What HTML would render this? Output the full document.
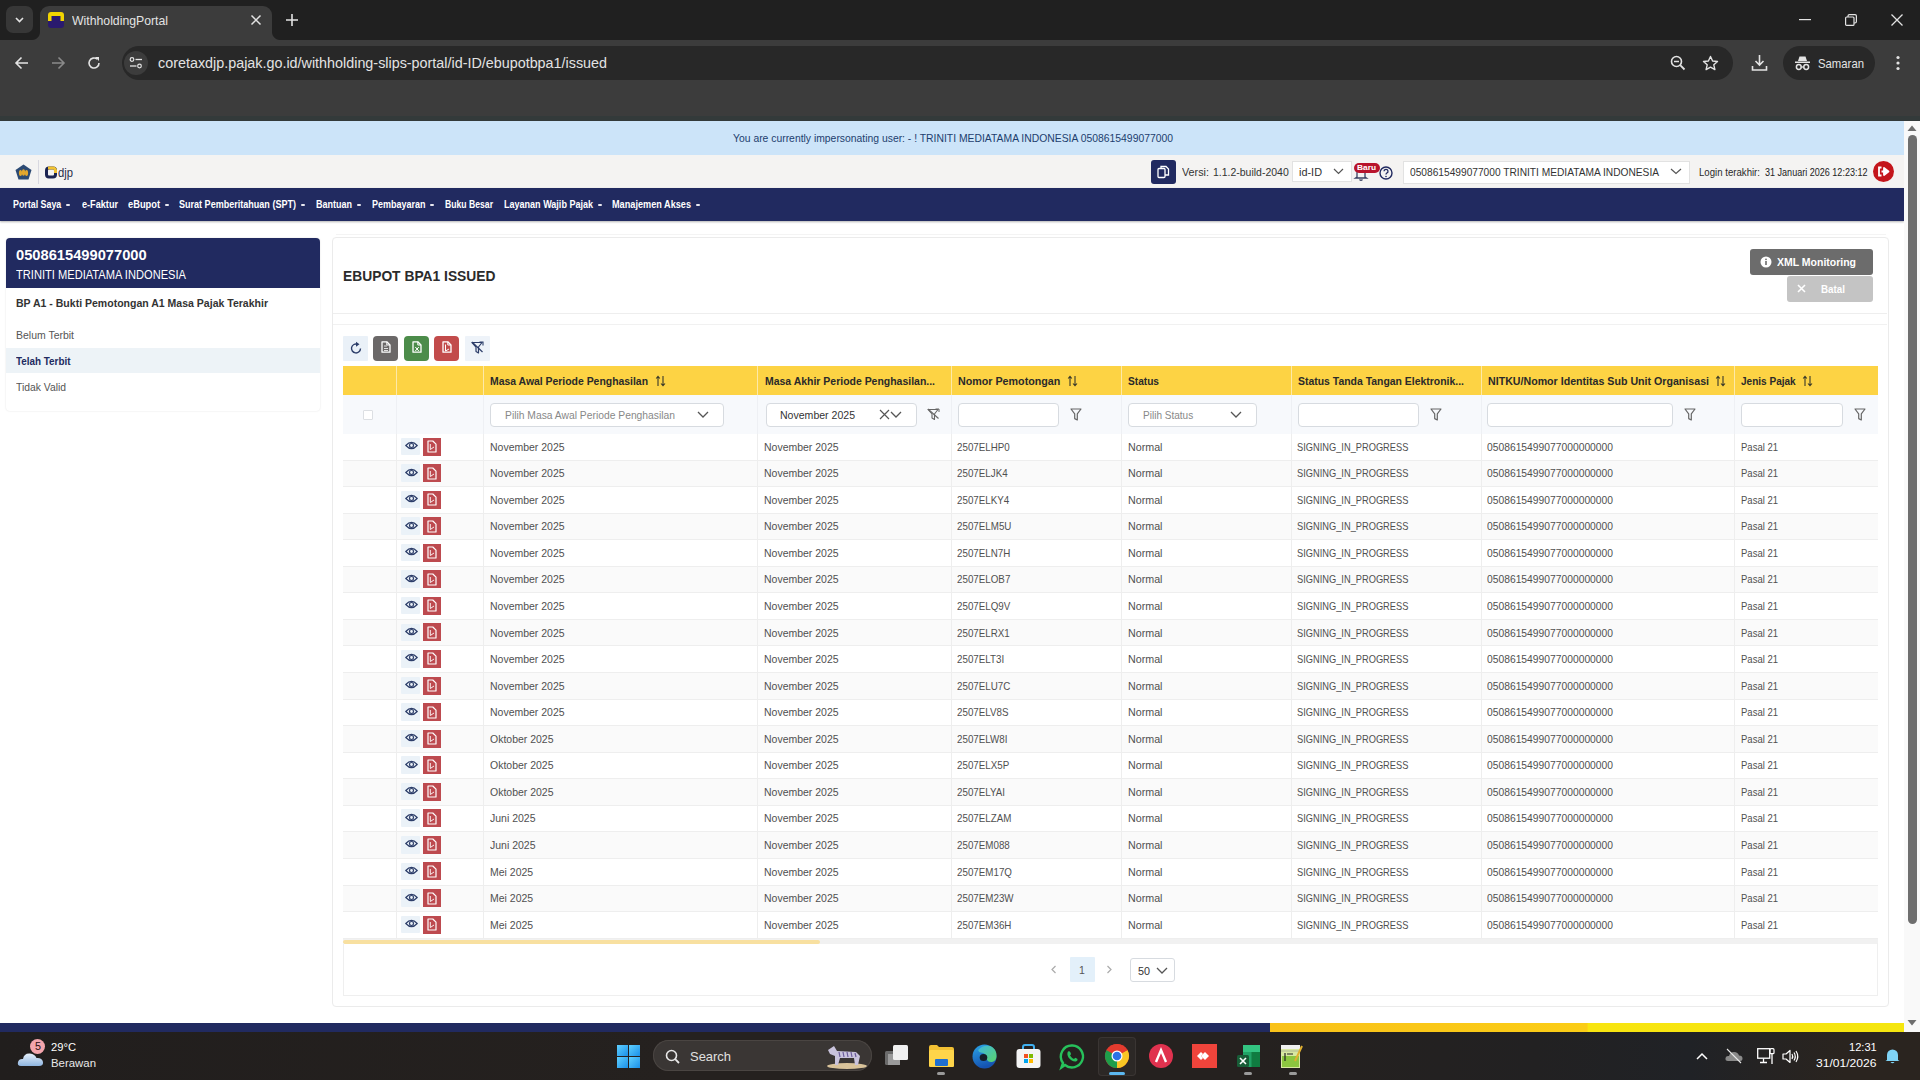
<!DOCTYPE html>
<html><head><meta charset="utf-8"><style>
html,body{margin:0;padding:0;width:1920px;height:1080px;overflow:hidden;position:relative;font-family:"Liberation Sans",sans-serif;}
.t{position:absolute;white-space:nowrap;line-height:1;transform-origin:0 0;}
svg{overflow:visible}
</style></head><body>
<div style="position:absolute;left:0px;top:0px;width:1920px;height:40px;background:#202020"></div>
<div style="position:absolute;left:0px;top:40px;width:1920px;height:81px;background:#3c3c3c"></div>
<div style="position:absolute;left:40px;top:6px;width:232px;height:40px;background:#3c3c3c;border-radius:9px 9px 0 0"></div>
<div style="position:absolute;left:32px;top:32px;width:8px;height:8px;background:radial-gradient(circle at 0 0,#202020 7.5px,#3c3c3c 8.5px)"></div>
<div style="position:absolute;left:272px;top:32px;width:8px;height:8px;background:radial-gradient(circle at 100% 0,#202020 7.5px,#3c3c3c 8.5px)"></div>
<div style="position:absolute;left:6px;top:6px;width:27px;height:27px;background:#373737;border-radius:7px"></div>
<svg style="position:absolute;left:14px;top:14px" width="11" height="11" viewBox="0 0 11 11"><path d="M2 4 L5.5 7.5 L9 4" stroke="#e3e3e3" stroke-width="1.6" fill="none"/></svg>
<svg style="position:absolute;left:48px;top:12px" width="16" height="16" viewBox="0 0 16 16"><rect x="0" y="0" width="16" height="16" rx="3" fill="#2a1a6e"/><path d="M0 9 V3 Q0 0 3 0 H13 Q16 0 16 3 V9 H12.5 V4 H3.5 V9 Z" fill="#f2d500"/></svg>
<div class="t" style="left:72.00px;top:14.13px;font-size:13px;color:#e3e3e3;transform:scaleX(0.9423);">WithholdingPortal</div>
<svg style="position:absolute;left:250px;top:14px" width="12" height="12" viewBox="0 0 12 12"><path d="M1.5 1.5 L10.5 10.5 M10.5 1.5 L1.5 10.5" stroke="#e3e3e3" stroke-width="1.5"/></svg>
<svg style="position:absolute;left:285px;top:13px" width="14" height="14" viewBox="0 0 14 14"><path d="M7 1 V13 M1 7 H13" stroke="#e3e3e3" stroke-width="1.6"/></svg>
<svg style="position:absolute;left:1799px;top:19px" width="12" height="2" viewBox="0 0 12 2"><rect width="12" height="1.2" fill="#e3e3e3"/></svg>
<svg style="position:absolute;left:1845px;top:14px" width="12" height="12" viewBox="0 0 12 12"><rect x="0.6" y="3" width="8.4" height="8.4" rx="1" stroke="#e3e3e3" stroke-width="1.2" fill="none"/><path d="M3 3 V2 Q3 0.6 4.4 0.6 H10 Q11.4 0.6 11.4 2 V7.6 Q11.4 9 10 9 H9" stroke="#e3e3e3" stroke-width="1.2" fill="none"/></svg>
<svg style="position:absolute;left:1891px;top:14px" width="12" height="12" viewBox="0 0 12 12"><path d="M0.5 0.5 L11.5 11.5 M11.5 0.5 L0.5 11.5" stroke="#e3e3e3" stroke-width="1.3"/></svg>
<svg style="position:absolute;left:14px;top:56px" width="16" height="14" viewBox="0 0 16 14"><path d="M14 7 H2 M7.5 1.5 L2 7 L7.5 12.5" stroke="#e3e3e3" stroke-width="1.6" fill="none"/></svg>
<svg style="position:absolute;left:50px;top:56px" width="16" height="14" viewBox="0 0 16 14"><path d="M2 7 H14 M8.5 1.5 L14 7 L8.5 12.5" stroke="#8a8a8a" stroke-width="1.6" fill="none"/></svg>
<svg style="position:absolute;left:87px;top:56px" width="14" height="14" viewBox="0 0 14 14"><path d="M12 7 A5 5 0 1 1 10.2 3.2" stroke="#e3e3e3" stroke-width="1.6" fill="none"/><path d="M8 1 L12 1 L12 5 Z" fill="#e3e3e3"/></svg>
<div style="position:absolute;left:122px;top:46px;width:1611px;height:34px;background:#282828;border-radius:17px"></div>
<div style="position:absolute;left:124px;top:51px;width:24px;height:24px;background:#3c3c3c;border-radius:12px"></div>
<svg style="position:absolute;left:129px;top:56px" width="14" height="14" viewBox="0 0 14 14"><circle cx="3" cy="3.5" r="1.8" stroke="#e3e3e3" stroke-width="1.2" fill="none"/><path d="M6.5 3.5 H13" stroke="#e3e3e3" stroke-width="1.3"/><circle cx="10.5" cy="10" r="1.8" stroke="#e3e3e3" stroke-width="1.2" fill="none"/><path d="M1 10 H7.5" stroke="#e3e3e3" stroke-width="1.3"/></svg>
<div class="t" style="left:157.50px;top:56.14px;font-size:14px;color:#e3e3e3;transform:scaleX(1.0248);">coretaxdjp.pajak.go.id/withholding-slips-portal/id-ID/ebupotbpa1/issued</div>
<svg style="position:absolute;left:1670px;top:55px" width="16" height="16" viewBox="0 0 16 16"><circle cx="6.5" cy="6.5" r="5" stroke="#e3e3e3" stroke-width="1.6" fill="none"/><path d="M4 6.5 H9" stroke="#e3e3e3" stroke-width="1.5"/><path d="M10.2 10.2 L14.5 14.5" stroke="#e3e3e3" stroke-width="1.8"/></svg>
<svg style="position:absolute;left:1702px;top:55px" width="17" height="16" viewBox="0 0 17 16"><path d="M8.5 1.5 L10.6 6 L15.5 6.5 L11.8 9.8 L12.9 14.6 L8.5 12.1 L4.1 14.6 L5.2 9.8 L1.5 6.5 L6.4 6 Z" stroke="#e3e3e3" stroke-width="1.4" fill="none" stroke-linejoin="round"/></svg>
<svg style="position:absolute;left:1751px;top:54px" width="17" height="18" viewBox="0 0 17 18"><path d="M8.5 1 V11 M4.5 7 L8.5 11 L12.5 7" stroke="#e3e3e3" stroke-width="1.6" fill="none"/><path d="M1.5 12 V16 H15.5 V12" stroke="#e3e3e3" stroke-width="1.6" fill="none"/></svg>
<div style="position:absolute;left:1783px;top:46px;width:92px;height:34px;background:#282828;border-radius:17px"></div>
<svg style="position:absolute;left:1794px;top:55px" width="17" height="16" viewBox="0 0 17 16"><path d="M4 6 L5.5 1.5 H11.5 L13 6 Z" fill="#e3e3e3"/><rect x="1" y="6.5" width="15" height="1.5" fill="#e3e3e3"/><circle cx="4.8" cy="12" r="2.4" stroke="#e3e3e3" stroke-width="1.5" fill="none"/><circle cx="12.2" cy="12" r="2.4" stroke="#e3e3e3" stroke-width="1.5" fill="none"/><path d="M7.2 12 H9.8" stroke="#e3e3e3" stroke-width="1.3"/></svg>
<div class="t" style="left:1818.00px;top:56.63px;font-size:13px;color:#e3e3e3;transform:scaleX(0.8721);">Samaran</div>
<svg style="position:absolute;left:1895px;top:55px" width="6" height="16" viewBox="0 0 6 16"><circle cx="3" cy="2.5" r="1.6" fill="#e3e3e3"/><circle cx="3" cy="8" r="1.6" fill="#e3e3e3"/><circle cx="3" cy="13.5" r="1.6" fill="#e3e3e3"/></svg>
<div style="position:absolute;left:0px;top:116px;width:1920px;height:5px;background:#333a3a"></div>
<div style="position:absolute;left:0px;top:121px;width:1904px;height:911px;background:#ffffff"></div>
<div style="position:absolute;left:0px;top:121px;width:1904px;height:34px;background:#cce4f9"></div>
<div class="t" style="left:732.70px;top:132.85px;font-size:10.5px;color:#1d3e6e;transform:scaleX(0.9877);">You are currently impersonating user: - ! TRINITI MEDIATAMA INDONESIA 0508615499077000</div>
<div style="position:absolute;left:0px;top:155px;width:1904px;height:33px;background:#f4f3f2"></div>
<svg style="position:absolute;left:15px;top:164px" width="17" height="16" viewBox="0 0 17 16"><path d="M8.5 0.5 L16.5 6 L13.5 15.5 H3.5 L0.5 6 Z" fill="#2c4a74"/><ellipse cx="5.5" cy="9" rx="1.6" ry="3" fill="#e2a72e"/><ellipse cx="8.5" cy="8.5" rx="1.6" ry="3.3" fill="#e2a72e"/><ellipse cx="11.5" cy="9" rx="1.6" ry="3" fill="#e2a72e"/></svg>
<div style="position:absolute;left:38px;top:160px;width:1px;height:24px;background:#d8d8e0"></div>
<svg style="position:absolute;left:45px;top:165px" width="28" height="15" viewBox="0 0 28 15"><rect x="1.5" y="3" width="9" height="9" rx="2.5" stroke="#1b2452" stroke-width="3" fill="none"/><path d="M3 3 H8 A2.5 2.5 0 0 1 10.5 5.5 V8" stroke="#f1c232" stroke-width="3" fill="none"/></svg>
<div class="t" style="left:57.50px;top:165.63px;font-size:13px;color:#2a2d4a;transform:scaleX(0.8647);">djp</div>
<div style="position:absolute;left:1151px;top:160px;width:25px;height:24px;background:#212a60;border-radius:3px"></div>
<svg style="position:absolute;left:1157px;top:165px" width="13" height="14" viewBox="0 0 13 14"><rect x="1" y="3.5" width="7" height="9" rx="1" fill="none" stroke="#fff" stroke-width="1.3"/><path d="M4 3.5 V1.5 H9 L11.5 4 V10 H8" fill="none" stroke="#fff" stroke-width="1.3"/></svg>
<div class="t" style="left:1181.60px;top:167.11px;font-size:11px;color:#333;transform:scaleX(0.9815);">Versi:</div>
<div class="t" style="left:1213.00px;top:167.11px;font-size:11px;color:#333;transform:scaleX(0.9523);">1.1.2-build-2040</div>
<div style="position:absolute;left:1292px;top:161px;width:60px;height:21px;background:#fff;border:1px solid #e2e2e2;box-sizing:border-box"></div>
<div class="t" style="left:1299.00px;top:167.11px;font-size:11px;color:#333;transform:scaleX(0.9904);">id-ID</div>
<svg style="position:absolute;left:1333px;top:168px" width="11" height="7" viewBox="0 0 11 7"><path d="M1 1 L5.5 5.5 L10 1" stroke="#555" stroke-width="1.2" fill="none"/></svg>
<svg style="position:absolute;left:1354px;top:165px" width="14" height="16" viewBox="0 0 14 16"><path d="M3 12 V7.5 A4 4 0 0 1 11 7.5 V12 L12.5 13 H1.5 Z" fill="none" stroke="#3a4060" stroke-width="1.3"/><path d="M5.5 14.5 Q7 16 8.5 14.5" stroke="#3a4060" stroke-width="1.2" fill="none"/></svg>
<div style="position:absolute;left:1354px;top:163px;width:26px;height:10px;background:#b8142c;border-radius:5px"></div>
<div class="t" style="left:1357.00px;top:163.58px;font-size:8px;color:#fff;font-weight:bold;transform:scaleX(1.0425);">Baru</div>
<svg style="position:absolute;left:1379px;top:166px" width="14" height="14" viewBox="0 0 14 14"><circle cx="7" cy="7" r="6" fill="none" stroke="#212a60" stroke-width="1.4"/><path d="M5 5.3 A2 2 0 1 1 7.6 7.2 Q7 7.6 7 8.6" fill="none" stroke="#212a60" stroke-width="1.3"/><circle cx="7" cy="10.5" r="0.8" fill="#212a60"/></svg>
<div style="position:absolute;left:1403px;top:160.5px;width:287px;height:23px;background:#fff;border:1px solid #e2e2e2;box-sizing:border-box"></div>
<div class="t" style="left:1409.70px;top:167.11px;font-size:11px;color:#333;transform:scaleX(0.9257);">0508615499077000 TRINITI MEDIATAMA INDONESIA</div>
<svg style="position:absolute;left:1670px;top:168px" width="12" height="7" viewBox="0 0 12 7"><path d="M1 1 L6 5.5 L11 1" stroke="#555" stroke-width="1.2" fill="none"/></svg>
<div class="t" style="left:1698.60px;top:167.60px;font-size:10px;color:#2a2a2a;transform:scaleX(0.9627);">Login terakhir:</div>
<div class="t" style="left:1764.50px;top:167.35px;font-size:10.5px;color:#222;transform:scaleX(0.8607);">31 Januari 2026 12:23:12</div>
<svg style="position:absolute;left:1873px;top:161px" width="21" height="21" viewBox="0 0 21 21"><circle cx="10.5" cy="10.5" r="10.5" fill="#c4161c"/><path d="M8.5 6.5 H6 V14.5 H8.5" stroke="#fff" stroke-width="1.8" fill="none"/><path d="M8.5 10.5 H12 M11 7 L15.5 10.5 L11 14 Z" stroke="#fff" stroke-width="1.8" fill="#fff" stroke-linejoin="round"/></svg>
<div style="position:absolute;left:0px;top:188px;width:1904px;height:33px;background:#212a60;box-shadow:0 1px 2px rgba(0,0,0,0.3)"></div>
<div class="t" style="left:13.00px;top:199.60px;font-size:10px;color:#ffffff;font-weight:bold;transform:scaleX(0.8858);">Portal Saya</div>
<div style="position:absolute;left:66px;top:204px;width:4px;height:2px;background:#e8e8f0;border-radius:1px"></div>
<div class="t" style="left:81.50px;top:199.60px;font-size:10px;color:#ffffff;font-weight:bold;transform:scaleX(0.9125);">e-Faktur</div>
<div class="t" style="left:128.00px;top:199.60px;font-size:10px;color:#ffffff;font-weight:bold;transform:scaleX(0.9293);">eBupot</div>
<div style="position:absolute;left:165px;top:204px;width:4px;height:2px;background:#e8e8f0;border-radius:1px"></div>
<div class="t" style="left:179.00px;top:199.60px;font-size:10px;color:#ffffff;font-weight:bold;transform:scaleX(0.9037);">Surat Pemberitahuan (SPT)</div>
<div style="position:absolute;left:301px;top:204px;width:4px;height:2px;background:#e8e8f0;border-radius:1px"></div>
<div class="t" style="left:316.00px;top:199.60px;font-size:10px;color:#ffffff;font-weight:bold;transform:scaleX(0.9001);">Bantuan</div>
<div style="position:absolute;left:357px;top:204px;width:4px;height:2px;background:#e8e8f0;border-radius:1px"></div>
<div class="t" style="left:371.50px;top:199.60px;font-size:10px;color:#ffffff;font-weight:bold;transform:scaleX(0.8995);">Pembayaran</div>
<div style="position:absolute;left:430px;top:204px;width:4px;height:2px;background:#e8e8f0;border-radius:1px"></div>
<div class="t" style="left:445.00px;top:199.60px;font-size:10px;color:#ffffff;font-weight:bold;transform:scaleX(0.8637);">Buku Besar</div>
<div class="t" style="left:504.00px;top:199.60px;font-size:10px;color:#ffffff;font-weight:bold;transform:scaleX(0.9031);">Layanan Wajib Pajak</div>
<div style="position:absolute;left:598px;top:204px;width:4px;height:2px;background:#e8e8f0;border-radius:1px"></div>
<div class="t" style="left:612.00px;top:199.60px;font-size:10px;color:#ffffff;font-weight:bold;transform:scaleX(0.9151);">Manajemen Akses</div>
<div style="position:absolute;left:696px;top:204px;width:4px;height:2px;background:#e8e8f0;border-radius:1px"></div>
<div style="position:absolute;left:6px;top:238px;width:314px;height:173px;background:#fff;border-radius:4px;box-shadow:0 0 2px rgba(0,0,0,0.12)"></div>
<div style="position:absolute;left:6px;top:238px;width:314px;height:50px;background:#212a60;border-radius:4px 4px 0 0"></div>
<div class="t" style="left:16.30px;top:246.95px;font-size:15px;color:#fff;font-weight:bold;transform:scaleX(0.9793);">0508615499077000</div>
<div class="t" style="left:16.30px;top:268.82px;font-size:12px;color:#fff;transform:scaleX(0.9261);">TRINITI MEDIATAMA INDONESIA</div>
<div class="t" style="left:15.50px;top:297.91px;font-size:11px;color:#333;font-weight:bold;transform:scaleX(0.9565);">BP A1 - Bukti Pemotongan A1 Masa Pajak Terakhir</div>
<div class="t" style="left:15.50px;top:330.36px;font-size:10.5px;color:#555;transform:scaleX(0.9972);">Belum Terbit</div>
<div style="position:absolute;left:6px;top:348px;width:314px;height:25px;background:#edf3f7"></div>
<div class="t" style="left:15.50px;top:355.86px;font-size:10.5px;color:#212a60;font-weight:bold;transform:scaleX(0.9405);">Telah Terbit</div>
<div class="t" style="left:15.50px;top:382.36px;font-size:10.5px;color:#555;transform:scaleX(0.9848);">Tidak Valid</div>
<div style="position:absolute;left:336px;top:234px;width:1550px;height:1px;background:#f4f4f4"></div>
<div style="position:absolute;left:332px;top:237px;width:1557px;height:770px;background:#fff;border:1px solid #ebebeb;border-radius:4px;box-sizing:border-box"></div>
<div class="t" style="left:343.00px;top:268.64px;font-size:14px;color:#2b2b2b;font-weight:bold;transform:scaleX(0.9867);">EBUPOT BPA1 ISSUED</div>
<div style="position:absolute;left:1750px;top:249px;width:123px;height:26px;background:#6c6c6c;border-radius:3px"></div>
<svg style="position:absolute;left:1760px;top:256px" width="12" height="12" viewBox="0 0 12 12"><circle cx="6" cy="6" r="5.5" fill="#fff"/><rect x="5.2" y="5" width="1.6" height="4" fill="#6c6c6c"/><circle cx="6" cy="3.3" r="0.9" fill="#6c6c6c"/></svg>
<div class="t" style="left:1776.70px;top:256.61px;font-size:11px;color:#fff;font-weight:bold;transform:scaleX(0.9531);">XML Monitoring</div>
<div style="position:absolute;left:1787px;top:275.5px;width:86px;height:26px;background:#c4c4c4;border-radius:3px"></div>
<svg style="position:absolute;left:1797px;top:284px" width="9" height="9" viewBox="0 0 9 9"><path d="M1 1 L8 8 M8 1 L1 8" stroke="#fff" stroke-width="1.6"/></svg>
<div class="t" style="left:1821.40px;top:283.61px;font-size:11px;color:#fff;font-weight:bold;transform:scaleX(0.8923);">Batal</div>
<div style="position:absolute;left:333px;top:313px;width:1554px;height:1px;background:#eeeeee"></div>
<div style="position:absolute;left:333px;top:324px;width:1554px;height:1px;background:#f1f1f1"></div>
<div style="position:absolute;left:343px;top:336px;width:25px;height:25px;background:#eaf1f8;border-radius:1px"></div>
<svg style="position:absolute;left:349px;top:341px" width="14" height="14" viewBox="0 0 14 14"><path d="M11.5 7.5 A4.5 4.5 0 1 1 8.5 3.2" stroke="#2d3e6a" stroke-width="1.4" fill="none"/><path d="M7 0.8 L10.5 3.2 L7 5.8 Z" fill="#2d3e6a"/></svg>
<div style="position:absolute;left:373px;top:336px;width:25px;height:25px;background:#6b6868;border-radius:4px"></div>
<svg style="position:absolute;left:381px;top:341px" width="10" height="12" viewBox="0 0 10 12"><path d="M1 0.8 H5.8 L9 4 V11.2 H1 Z" fill="none" stroke="#fff" stroke-width="1.3" stroke-linejoin="round"/><path d="M5.8 0.8 V4 H9" fill="none" stroke="#fff" stroke-width="1"/><path d="M3 5 H6 M3 7.5 H7 M3 9.5 H7" stroke="#fff" stroke-width="0.8"/></svg>
<div style="position:absolute;left:404px;top:336px;width:25px;height:25px;background:#4c8c4a;border-radius:4px"></div>
<svg style="position:absolute;left:412px;top:341px" width="10" height="12" viewBox="0 0 10 12"><path d="M1 0.8 H5.8 L9 4 V11.2 H1 Z" fill="none" stroke="#fff" stroke-width="1.3" stroke-linejoin="round"/><path d="M5.8 0.8 V4 H9" fill="none" stroke="#fff" stroke-width="1"/><path d="M3.3 6 L6.8 10 M6.8 6 L3.3 10" stroke="#fff" stroke-width="1"/></svg>
<div style="position:absolute;left:434px;top:336px;width:25px;height:25px;background:#c24b4b;border-radius:4px"></div>
<svg style="position:absolute;left:442px;top:341px" width="10" height="12" viewBox="0 0 10 12"><path d="M1 0.8 H5.8 L9 4 V11.2 H1 Z" fill="none" stroke="#fff" stroke-width="1.3" stroke-linejoin="round"/><path d="M5.8 0.8 V4 H9" fill="none" stroke="#fff" stroke-width="1"/><path d="M3.5 3.5 V10 L7 8" stroke="#fff" stroke-width="1" fill="none"/></svg>
<div style="position:absolute;left:465px;top:336px;width:25px;height:25px;background:#eef3f9;border-radius:1px"></div>
<svg style="position:absolute;left:471px;top:341px" width="13" height="13" viewBox="0 0 13 13"><path d="M1 1.5 H11 L7.5 6 V12 L5 10.5 V6 Z" fill="none" stroke="#2d3e6a" stroke-width="1.2" stroke-linejoin="round"/><path d="M1 1 L11.5 11" stroke="#2d3e6a" stroke-width="1.2"/><path d="M8.5 1 H12 V4.5" stroke="#2d3e6a" stroke-width="1.1" fill="none"/></svg>
<div style="position:absolute;left:343px;top:366px;width:1535px;height:29px;background:#fdd344"></div>
<div style="position:absolute;left:396px;top:366px;width:1px;height:29px;background:#fde9a8"></div>
<div style="position:absolute;left:483px;top:366px;width:1px;height:29px;background:#fde9a8"></div>
<div style="position:absolute;left:757px;top:366px;width:1px;height:29px;background:#fde9a8"></div>
<div style="position:absolute;left:951px;top:366px;width:1px;height:29px;background:#fde9a8"></div>
<div style="position:absolute;left:1121px;top:366px;width:1px;height:29px;background:#fde9a8"></div>
<div style="position:absolute;left:1291px;top:366px;width:1px;height:29px;background:#fde9a8"></div>
<div style="position:absolute;left:1481px;top:366px;width:1px;height:29px;background:#fde9a8"></div>
<div style="position:absolute;left:1734px;top:366px;width:1px;height:29px;background:#fde9a8"></div>
<div class="t" style="left:490.00px;top:375.61px;font-size:11px;color:#2a2a2a;font-weight:bold;transform:scaleX(0.9468);">Masa Awal Periode Penghasilan</div>
<svg style="position:absolute;left:655px;top:375px" width="11" height="12" viewBox="0 0 11 12"><path d="M3 11 V1.5 M1.2 3.5 L3 1.3 L4.8 3.5" stroke="#3a3a2a" stroke-width="1.1" fill="none"/><path d="M8 1 V10.5 M6 8.5 L8 10.7 L10 8.5" stroke="#3a3a2a" stroke-width="1.1" fill="none"/></svg>
<div class="t" style="left:765.00px;top:375.61px;font-size:11px;color:#2a2a2a;font-weight:bold;transform:scaleX(0.9513);">Masa Akhir Periode Penghasilan...</div>
<div class="t" style="left:957.70px;top:375.61px;font-size:11px;color:#2a2a2a;font-weight:bold;transform:scaleX(0.9733);">Nomor Pemotongan</div>
<svg style="position:absolute;left:1067px;top:375px" width="11" height="12" viewBox="0 0 11 12"><path d="M3 11 V1.5 M1.2 3.5 L3 1.3 L4.8 3.5" stroke="#3a3a2a" stroke-width="1.1" fill="none"/><path d="M8 1 V10.5 M6 8.5 L8 10.7 L10 8.5" stroke="#3a3a2a" stroke-width="1.1" fill="none"/></svg>
<div class="t" style="left:1127.50px;top:375.61px;font-size:11px;color:#2a2a2a;font-weight:bold;transform:scaleX(0.9222);">Status</div>
<div class="t" style="left:1297.80px;top:375.61px;font-size:11px;color:#2a2a2a;font-weight:bold;transform:scaleX(0.9486);">Status Tanda Tangan Elektronik...</div>
<div class="t" style="left:1487.60px;top:375.61px;font-size:11px;color:#2a2a2a;font-weight:bold;transform:scaleX(0.9669);">NITKU/Nomor Identitas Sub Unit Organisasi</div>
<svg style="position:absolute;left:1715px;top:375px" width="11" height="12" viewBox="0 0 11 12"><path d="M3 11 V1.5 M1.2 3.5 L3 1.3 L4.8 3.5" stroke="#3a3a2a" stroke-width="1.1" fill="none"/><path d="M8 1 V10.5 M6 8.5 L8 10.7 L10 8.5" stroke="#3a3a2a" stroke-width="1.1" fill="none"/></svg>
<div class="t" style="left:1741.00px;top:375.61px;font-size:11px;color:#2a2a2a;font-weight:bold;transform:scaleX(0.9128);">Jenis Pajak</div>
<svg style="position:absolute;left:1802px;top:375px" width="11" height="12" viewBox="0 0 11 12"><path d="M3 11 V1.5 M1.2 3.5 L3 1.3 L4.8 3.5" stroke="#3a3a2a" stroke-width="1.1" fill="none"/><path d="M8 1 V10.5 M6 8.5 L8 10.7 L10 8.5" stroke="#3a3a2a" stroke-width="1.1" fill="none"/></svg>
<div style="position:absolute;left:343px;top:395px;width:1535px;height:39px;background:#f7f9fc"></div>
<div style="position:absolute;left:396px;top:395px;width:1px;height:39px;background:#eef0f4"></div>
<div style="position:absolute;left:483px;top:395px;width:1px;height:39px;background:#eef0f4"></div>
<div style="position:absolute;left:757px;top:395px;width:1px;height:39px;background:#eef0f4"></div>
<div style="position:absolute;left:951px;top:395px;width:1px;height:39px;background:#eef0f4"></div>
<div style="position:absolute;left:1121px;top:395px;width:1px;height:39px;background:#eef0f4"></div>
<div style="position:absolute;left:1291px;top:395px;width:1px;height:39px;background:#eef0f4"></div>
<div style="position:absolute;left:1481px;top:395px;width:1px;height:39px;background:#eef0f4"></div>
<div style="position:absolute;left:1734px;top:395px;width:1px;height:39px;background:#eef0f4"></div>
<div style="position:absolute;left:343px;top:434px;width:1535px;height:1px;background:#eceef1"></div>
<div style="position:absolute;left:363px;top:410px;width:10px;height:10px;border:1px solid #dcdfe3;box-sizing:border-box;background:#fff;border-radius:1px"></div>
<div style="position:absolute;left:490px;top:403px;width:234px;height:24px;background:#fff;border:1px solid #d7dbe0;border-radius:4px;box-sizing:border-box"></div>
<div class="t" style="left:504.50px;top:409.86px;font-size:10.5px;color:#888;transform:scaleX(0.9818);">Pilih Masa Awal Periode Penghasilan</div>
<svg style="position:absolute;left:697px;top:411px" width="12" height="7" viewBox="0 0 12 7"><path d="M1 1 L6 6 L11 1" stroke="#555" stroke-width="1.3" fill="none"/></svg>
<div style="position:absolute;left:766px;top:403px;width:151px;height:24px;background:#fff;border:1px solid #d7dbe0;border-radius:4px;box-sizing:border-box"></div>
<div class="t" style="left:779.70px;top:409.61px;font-size:11px;color:#333;transform:scaleX(0.9583);">November 2025</div>
<svg style="position:absolute;left:879px;top:409px" width="11" height="11" viewBox="0 0 11 11"><path d="M1 1 L10 10 M10 1 L1 10" stroke="#555" stroke-width="1.2"/></svg>
<svg style="position:absolute;left:890px;top:411px" width="12" height="7" viewBox="0 0 12 7"><path d="M1 1 L6 6 L11 1" stroke="#555" stroke-width="1.3" fill="none"/></svg>
<svg style="position:absolute;left:927px;top:408px" width="13" height="12" viewBox="0 0 13 12"><path d="M1 1.5 H11 L7.5 6 V11.5 L5 10 V6 Z" fill="none" stroke="#666" stroke-width="1.1" stroke-linejoin="round"/><path d="M1 1 L11.5 10.5" stroke="#666" stroke-width="1.1"/><path d="M8.5 1 H12 V4" stroke="#666" stroke-width="1" fill="none"/></svg>
<div style="position:absolute;left:958px;top:403px;width:101px;height:24px;background:#fff;border:1px solid #d7dbe0;border-radius:4px;box-sizing:border-box"></div>
<svg style="position:absolute;left:1070px;top:408px" width="12" height="13" viewBox="0 0 12 13"><path d="M1 1 H11 L7.3 5.8 V12 L4.7 10.6 V5.8 Z" fill="none" stroke="#666" stroke-width="1.2" stroke-linejoin="round"/></svg>
<div style="position:absolute;left:1128px;top:403px;width:129px;height:24px;background:#fff;border:1px solid #d7dbe0;border-radius:4px;box-sizing:border-box"></div>
<div class="t" style="left:1142.80px;top:409.86px;font-size:10.5px;color:#888;transform:scaleX(0.9557);">Pilih Status</div>
<svg style="position:absolute;left:1230px;top:411px" width="12" height="7" viewBox="0 0 12 7"><path d="M1 1 L6 6 L11 1" stroke="#555" stroke-width="1.3" fill="none"/></svg>
<div style="position:absolute;left:1298px;top:403px;width:121px;height:24px;background:#fff;border:1px solid #d7dbe0;border-radius:4px;box-sizing:border-box"></div>
<svg style="position:absolute;left:1430px;top:408px" width="12" height="13" viewBox="0 0 12 13"><path d="M1 1 H11 L7.3 5.8 V12 L4.7 10.6 V5.8 Z" fill="none" stroke="#666" stroke-width="1.2" stroke-linejoin="round"/></svg>
<div style="position:absolute;left:1487px;top:403px;width:186px;height:24px;background:#fff;border:1px solid #d7dbe0;border-radius:4px;box-sizing:border-box"></div>
<svg style="position:absolute;left:1684px;top:408px" width="12" height="13" viewBox="0 0 12 13"><path d="M1 1 H11 L7.3 5.8 V12 L4.7 10.6 V5.8 Z" fill="none" stroke="#666" stroke-width="1.2" stroke-linejoin="round"/></svg>
<div style="position:absolute;left:1741px;top:403px;width:102px;height:24px;background:#fff;border:1px solid #d7dbe0;border-radius:4px;box-sizing:border-box"></div>
<svg style="position:absolute;left:1854px;top:408px" width="12" height="13" viewBox="0 0 12 13"><path d="M1 1 H11 L7.3 5.8 V12 L4.7 10.6 V5.8 Z" fill="none" stroke="#666" stroke-width="1.2" stroke-linejoin="round"/></svg>
<div style="position:absolute;left:343px;top:434.00px;width:1535px;height:26.56px;background:#ffffff;border-bottom:1px solid #eeeeee;box-sizing:border-box"></div>
<div style="position:absolute;left:401px;top:437.60px;width:19px;height:17.5px;background:#ebf2f8;border-radius:1px"></div>
<svg style="position:absolute;left:405px;top:441px" width="13" height="9" viewBox="0 0 13 9"><path d="M0.8 4.5 Q6.5 -1.8 12.2 4.5 Q6.5 10.8 0.8 4.5 Z" fill="none" stroke="#2d3e6a" stroke-width="1.15"/><circle cx="6.5" cy="4.5" r="2" fill="none" stroke="#2d3e6a" stroke-width="1.2"/></svg>
<div style="position:absolute;left:423px;top:437.50px;width:18px;height:18px;background:#bd4a4f"></div>
<svg style="position:absolute;left:427px;top:440px" width="10" height="13" viewBox="0 0 10 13"><path d="M1 1 H5.8 L9 4.2 V12 H1 Z" fill="none" stroke="#fff" stroke-width="1.2" stroke-linejoin="round"/><path d="M3.3 4 V9.5 L7 7" stroke="#fff" stroke-width="0.9" fill="none"/></svg>
<div class="t" style="left:489.60px;top:441.61px;font-size:11px;color:#505050;transform:scaleX(0.9532);">November 2025</div>
<div class="t" style="left:764.00px;top:441.61px;font-size:11px;color:#505050;transform:scaleX(0.9532);">November 2025</div>
<div class="t" style="left:957.00px;top:441.61px;font-size:11px;color:#505050;transform:scaleX(0.8900);">2507ELHP0</div>
<div class="t" style="left:1127.50px;top:441.61px;font-size:11px;color:#505050;transform:scaleX(0.9733);">Normal</div>
<div class="t" style="left:1297.30px;top:441.61px;font-size:11px;color:#505050;transform:scaleX(0.8437);">SIGNING_IN_PROGRESS</div>
<div class="t" style="left:1487.00px;top:441.61px;font-size:11px;color:#505050;transform:scaleX(0.9363);">0508615499077000000000</div>
<div class="t" style="left:1740.50px;top:441.61px;font-size:11px;color:#505050;transform:scaleX(0.8644);">Pasal 21</div>
<div style="position:absolute;left:343px;top:460.56px;width:1535px;height:26.56px;background:#fafafa;border-bottom:1px solid #eeeeee;box-sizing:border-box"></div>
<div style="position:absolute;left:401px;top:464.16px;width:19px;height:17.5px;background:#ebf2f8;border-radius:1px"></div>
<svg style="position:absolute;left:405px;top:468px" width="13" height="9" viewBox="0 0 13 9"><path d="M0.8 4.5 Q6.5 -1.8 12.2 4.5 Q6.5 10.8 0.8 4.5 Z" fill="none" stroke="#2d3e6a" stroke-width="1.15"/><circle cx="6.5" cy="4.5" r="2" fill="none" stroke="#2d3e6a" stroke-width="1.2"/></svg>
<div style="position:absolute;left:423px;top:464.06px;width:18px;height:18px;background:#bd4a4f"></div>
<svg style="position:absolute;left:427px;top:467px" width="10" height="13" viewBox="0 0 10 13"><path d="M1 1 H5.8 L9 4.2 V12 H1 Z" fill="none" stroke="#fff" stroke-width="1.2" stroke-linejoin="round"/><path d="M3.3 4 V9.5 L7 7" stroke="#fff" stroke-width="0.9" fill="none"/></svg>
<div class="t" style="left:489.60px;top:468.17px;font-size:11px;color:#505050;transform:scaleX(0.9532);">November 2025</div>
<div class="t" style="left:764.00px;top:468.17px;font-size:11px;color:#505050;transform:scaleX(0.9532);">November 2025</div>
<div class="t" style="left:957.00px;top:468.17px;font-size:11px;color:#505050;transform:scaleX(0.8900);">2507ELJK4</div>
<div class="t" style="left:1127.50px;top:468.17px;font-size:11px;color:#505050;transform:scaleX(0.9733);">Normal</div>
<div class="t" style="left:1297.30px;top:468.17px;font-size:11px;color:#505050;transform:scaleX(0.8437);">SIGNING_IN_PROGRESS</div>
<div class="t" style="left:1487.00px;top:468.17px;font-size:11px;color:#505050;transform:scaleX(0.9363);">0508615499077000000000</div>
<div class="t" style="left:1740.50px;top:468.17px;font-size:11px;color:#505050;transform:scaleX(0.8644);">Pasal 21</div>
<div style="position:absolute;left:343px;top:487.12px;width:1535px;height:26.56px;background:#ffffff;border-bottom:1px solid #eeeeee;box-sizing:border-box"></div>
<div style="position:absolute;left:401px;top:490.72px;width:19px;height:17.5px;background:#ebf2f8;border-radius:1px"></div>
<svg style="position:absolute;left:405px;top:494px" width="13" height="9" viewBox="0 0 13 9"><path d="M0.8 4.5 Q6.5 -1.8 12.2 4.5 Q6.5 10.8 0.8 4.5 Z" fill="none" stroke="#2d3e6a" stroke-width="1.15"/><circle cx="6.5" cy="4.5" r="2" fill="none" stroke="#2d3e6a" stroke-width="1.2"/></svg>
<div style="position:absolute;left:423px;top:490.62px;width:18px;height:18px;background:#bd4a4f"></div>
<svg style="position:absolute;left:427px;top:493px" width="10" height="13" viewBox="0 0 10 13"><path d="M1 1 H5.8 L9 4.2 V12 H1 Z" fill="none" stroke="#fff" stroke-width="1.2" stroke-linejoin="round"/><path d="M3.3 4 V9.5 L7 7" stroke="#fff" stroke-width="0.9" fill="none"/></svg>
<div class="t" style="left:489.60px;top:494.73px;font-size:11px;color:#505050;transform:scaleX(0.9532);">November 2025</div>
<div class="t" style="left:764.00px;top:494.73px;font-size:11px;color:#505050;transform:scaleX(0.9532);">November 2025</div>
<div class="t" style="left:957.00px;top:494.73px;font-size:11px;color:#505050;transform:scaleX(0.8900);">2507ELKY4</div>
<div class="t" style="left:1127.50px;top:494.73px;font-size:11px;color:#505050;transform:scaleX(0.9733);">Normal</div>
<div class="t" style="left:1297.30px;top:494.73px;font-size:11px;color:#505050;transform:scaleX(0.8437);">SIGNING_IN_PROGRESS</div>
<div class="t" style="left:1487.00px;top:494.73px;font-size:11px;color:#505050;transform:scaleX(0.9363);">0508615499077000000000</div>
<div class="t" style="left:1740.50px;top:494.73px;font-size:11px;color:#505050;transform:scaleX(0.8644);">Pasal 21</div>
<div style="position:absolute;left:343px;top:513.68px;width:1535px;height:26.56px;background:#fafafa;border-bottom:1px solid #eeeeee;box-sizing:border-box"></div>
<div style="position:absolute;left:401px;top:517.28px;width:19px;height:17.5px;background:#ebf2f8;border-radius:1px"></div>
<svg style="position:absolute;left:405px;top:521px" width="13" height="9" viewBox="0 0 13 9"><path d="M0.8 4.5 Q6.5 -1.8 12.2 4.5 Q6.5 10.8 0.8 4.5 Z" fill="none" stroke="#2d3e6a" stroke-width="1.15"/><circle cx="6.5" cy="4.5" r="2" fill="none" stroke="#2d3e6a" stroke-width="1.2"/></svg>
<div style="position:absolute;left:423px;top:517.18px;width:18px;height:18px;background:#bd4a4f"></div>
<svg style="position:absolute;left:427px;top:520px" width="10" height="13" viewBox="0 0 10 13"><path d="M1 1 H5.8 L9 4.2 V12 H1 Z" fill="none" stroke="#fff" stroke-width="1.2" stroke-linejoin="round"/><path d="M3.3 4 V9.5 L7 7" stroke="#fff" stroke-width="0.9" fill="none"/></svg>
<div class="t" style="left:489.60px;top:521.29px;font-size:11px;color:#505050;transform:scaleX(0.9532);">November 2025</div>
<div class="t" style="left:764.00px;top:521.29px;font-size:11px;color:#505050;transform:scaleX(0.9532);">November 2025</div>
<div class="t" style="left:957.00px;top:521.29px;font-size:11px;color:#505050;transform:scaleX(0.8900);">2507ELM5U</div>
<div class="t" style="left:1127.50px;top:521.29px;font-size:11px;color:#505050;transform:scaleX(0.9733);">Normal</div>
<div class="t" style="left:1297.30px;top:521.29px;font-size:11px;color:#505050;transform:scaleX(0.8437);">SIGNING_IN_PROGRESS</div>
<div class="t" style="left:1487.00px;top:521.29px;font-size:11px;color:#505050;transform:scaleX(0.9363);">0508615499077000000000</div>
<div class="t" style="left:1740.50px;top:521.29px;font-size:11px;color:#505050;transform:scaleX(0.8644);">Pasal 21</div>
<div style="position:absolute;left:343px;top:540.24px;width:1535px;height:26.56px;background:#ffffff;border-bottom:1px solid #eeeeee;box-sizing:border-box"></div>
<div style="position:absolute;left:401px;top:543.84px;width:19px;height:17.5px;background:#ebf2f8;border-radius:1px"></div>
<svg style="position:absolute;left:405px;top:547px" width="13" height="9" viewBox="0 0 13 9"><path d="M0.8 4.5 Q6.5 -1.8 12.2 4.5 Q6.5 10.8 0.8 4.5 Z" fill="none" stroke="#2d3e6a" stroke-width="1.15"/><circle cx="6.5" cy="4.5" r="2" fill="none" stroke="#2d3e6a" stroke-width="1.2"/></svg>
<div style="position:absolute;left:423px;top:543.74px;width:18px;height:18px;background:#bd4a4f"></div>
<svg style="position:absolute;left:427px;top:546px" width="10" height="13" viewBox="0 0 10 13"><path d="M1 1 H5.8 L9 4.2 V12 H1 Z" fill="none" stroke="#fff" stroke-width="1.2" stroke-linejoin="round"/><path d="M3.3 4 V9.5 L7 7" stroke="#fff" stroke-width="0.9" fill="none"/></svg>
<div class="t" style="left:489.60px;top:547.85px;font-size:11px;color:#505050;transform:scaleX(0.9532);">November 2025</div>
<div class="t" style="left:764.00px;top:547.85px;font-size:11px;color:#505050;transform:scaleX(0.9532);">November 2025</div>
<div class="t" style="left:957.00px;top:547.85px;font-size:11px;color:#505050;transform:scaleX(0.8900);">2507ELN7H</div>
<div class="t" style="left:1127.50px;top:547.85px;font-size:11px;color:#505050;transform:scaleX(0.9733);">Normal</div>
<div class="t" style="left:1297.30px;top:547.85px;font-size:11px;color:#505050;transform:scaleX(0.8437);">SIGNING_IN_PROGRESS</div>
<div class="t" style="left:1487.00px;top:547.85px;font-size:11px;color:#505050;transform:scaleX(0.9363);">0508615499077000000000</div>
<div class="t" style="left:1740.50px;top:547.85px;font-size:11px;color:#505050;transform:scaleX(0.8644);">Pasal 21</div>
<div style="position:absolute;left:343px;top:566.80px;width:1535px;height:26.56px;background:#fafafa;border-bottom:1px solid #eeeeee;box-sizing:border-box"></div>
<div style="position:absolute;left:401px;top:570.40px;width:19px;height:17.5px;background:#ebf2f8;border-radius:1px"></div>
<svg style="position:absolute;left:405px;top:574px" width="13" height="9" viewBox="0 0 13 9"><path d="M0.8 4.5 Q6.5 -1.8 12.2 4.5 Q6.5 10.8 0.8 4.5 Z" fill="none" stroke="#2d3e6a" stroke-width="1.15"/><circle cx="6.5" cy="4.5" r="2" fill="none" stroke="#2d3e6a" stroke-width="1.2"/></svg>
<div style="position:absolute;left:423px;top:570.30px;width:18px;height:18px;background:#bd4a4f"></div>
<svg style="position:absolute;left:427px;top:573px" width="10" height="13" viewBox="0 0 10 13"><path d="M1 1 H5.8 L9 4.2 V12 H1 Z" fill="none" stroke="#fff" stroke-width="1.2" stroke-linejoin="round"/><path d="M3.3 4 V9.5 L7 7" stroke="#fff" stroke-width="0.9" fill="none"/></svg>
<div class="t" style="left:489.60px;top:574.41px;font-size:11px;color:#505050;transform:scaleX(0.9532);">November 2025</div>
<div class="t" style="left:764.00px;top:574.41px;font-size:11px;color:#505050;transform:scaleX(0.9532);">November 2025</div>
<div class="t" style="left:957.00px;top:574.41px;font-size:11px;color:#505050;transform:scaleX(0.8900);">2507ELOB7</div>
<div class="t" style="left:1127.50px;top:574.41px;font-size:11px;color:#505050;transform:scaleX(0.9733);">Normal</div>
<div class="t" style="left:1297.30px;top:574.41px;font-size:11px;color:#505050;transform:scaleX(0.8437);">SIGNING_IN_PROGRESS</div>
<div class="t" style="left:1487.00px;top:574.41px;font-size:11px;color:#505050;transform:scaleX(0.9363);">0508615499077000000000</div>
<div class="t" style="left:1740.50px;top:574.41px;font-size:11px;color:#505050;transform:scaleX(0.8644);">Pasal 21</div>
<div style="position:absolute;left:343px;top:593.36px;width:1535px;height:26.56px;background:#ffffff;border-bottom:1px solid #eeeeee;box-sizing:border-box"></div>
<div style="position:absolute;left:401px;top:596.96px;width:19px;height:17.5px;background:#ebf2f8;border-radius:1px"></div>
<svg style="position:absolute;left:405px;top:600px" width="13" height="9" viewBox="0 0 13 9"><path d="M0.8 4.5 Q6.5 -1.8 12.2 4.5 Q6.5 10.8 0.8 4.5 Z" fill="none" stroke="#2d3e6a" stroke-width="1.15"/><circle cx="6.5" cy="4.5" r="2" fill="none" stroke="#2d3e6a" stroke-width="1.2"/></svg>
<div style="position:absolute;left:423px;top:596.86px;width:18px;height:18px;background:#bd4a4f"></div>
<svg style="position:absolute;left:427px;top:599px" width="10" height="13" viewBox="0 0 10 13"><path d="M1 1 H5.8 L9 4.2 V12 H1 Z" fill="none" stroke="#fff" stroke-width="1.2" stroke-linejoin="round"/><path d="M3.3 4 V9.5 L7 7" stroke="#fff" stroke-width="0.9" fill="none"/></svg>
<div class="t" style="left:489.60px;top:600.97px;font-size:11px;color:#505050;transform:scaleX(0.9532);">November 2025</div>
<div class="t" style="left:764.00px;top:600.97px;font-size:11px;color:#505050;transform:scaleX(0.9532);">November 2025</div>
<div class="t" style="left:957.00px;top:600.97px;font-size:11px;color:#505050;transform:scaleX(0.8900);">2507ELQ9V</div>
<div class="t" style="left:1127.50px;top:600.97px;font-size:11px;color:#505050;transform:scaleX(0.9733);">Normal</div>
<div class="t" style="left:1297.30px;top:600.97px;font-size:11px;color:#505050;transform:scaleX(0.8437);">SIGNING_IN_PROGRESS</div>
<div class="t" style="left:1487.00px;top:600.97px;font-size:11px;color:#505050;transform:scaleX(0.9363);">0508615499077000000000</div>
<div class="t" style="left:1740.50px;top:600.97px;font-size:11px;color:#505050;transform:scaleX(0.8644);">Pasal 21</div>
<div style="position:absolute;left:343px;top:619.92px;width:1535px;height:26.56px;background:#fafafa;border-bottom:1px solid #eeeeee;box-sizing:border-box"></div>
<div style="position:absolute;left:401px;top:623.52px;width:19px;height:17.5px;background:#ebf2f8;border-radius:1px"></div>
<svg style="position:absolute;left:405px;top:627px" width="13" height="9" viewBox="0 0 13 9"><path d="M0.8 4.5 Q6.5 -1.8 12.2 4.5 Q6.5 10.8 0.8 4.5 Z" fill="none" stroke="#2d3e6a" stroke-width="1.15"/><circle cx="6.5" cy="4.5" r="2" fill="none" stroke="#2d3e6a" stroke-width="1.2"/></svg>
<div style="position:absolute;left:423px;top:623.42px;width:18px;height:18px;background:#bd4a4f"></div>
<svg style="position:absolute;left:427px;top:626px" width="10" height="13" viewBox="0 0 10 13"><path d="M1 1 H5.8 L9 4.2 V12 H1 Z" fill="none" stroke="#fff" stroke-width="1.2" stroke-linejoin="round"/><path d="M3.3 4 V9.5 L7 7" stroke="#fff" stroke-width="0.9" fill="none"/></svg>
<div class="t" style="left:489.60px;top:627.53px;font-size:11px;color:#505050;transform:scaleX(0.9532);">November 2025</div>
<div class="t" style="left:764.00px;top:627.53px;font-size:11px;color:#505050;transform:scaleX(0.9532);">November 2025</div>
<div class="t" style="left:957.00px;top:627.53px;font-size:11px;color:#505050;transform:scaleX(0.8900);">2507ELRX1</div>
<div class="t" style="left:1127.50px;top:627.53px;font-size:11px;color:#505050;transform:scaleX(0.9733);">Normal</div>
<div class="t" style="left:1297.30px;top:627.53px;font-size:11px;color:#505050;transform:scaleX(0.8437);">SIGNING_IN_PROGRESS</div>
<div class="t" style="left:1487.00px;top:627.53px;font-size:11px;color:#505050;transform:scaleX(0.9363);">0508615499077000000000</div>
<div class="t" style="left:1740.50px;top:627.53px;font-size:11px;color:#505050;transform:scaleX(0.8644);">Pasal 21</div>
<div style="position:absolute;left:343px;top:646.48px;width:1535px;height:26.56px;background:#ffffff;border-bottom:1px solid #eeeeee;box-sizing:border-box"></div>
<div style="position:absolute;left:401px;top:650.08px;width:19px;height:17.5px;background:#ebf2f8;border-radius:1px"></div>
<svg style="position:absolute;left:405px;top:653px" width="13" height="9" viewBox="0 0 13 9"><path d="M0.8 4.5 Q6.5 -1.8 12.2 4.5 Q6.5 10.8 0.8 4.5 Z" fill="none" stroke="#2d3e6a" stroke-width="1.15"/><circle cx="6.5" cy="4.5" r="2" fill="none" stroke="#2d3e6a" stroke-width="1.2"/></svg>
<div style="position:absolute;left:423px;top:649.98px;width:18px;height:18px;background:#bd4a4f"></div>
<svg style="position:absolute;left:427px;top:652px" width="10" height="13" viewBox="0 0 10 13"><path d="M1 1 H5.8 L9 4.2 V12 H1 Z" fill="none" stroke="#fff" stroke-width="1.2" stroke-linejoin="round"/><path d="M3.3 4 V9.5 L7 7" stroke="#fff" stroke-width="0.9" fill="none"/></svg>
<div class="t" style="left:489.60px;top:654.09px;font-size:11px;color:#505050;transform:scaleX(0.9532);">November 2025</div>
<div class="t" style="left:764.00px;top:654.09px;font-size:11px;color:#505050;transform:scaleX(0.9532);">November 2025</div>
<div class="t" style="left:957.00px;top:654.09px;font-size:11px;color:#505050;transform:scaleX(0.8900);">2507ELT3I</div>
<div class="t" style="left:1127.50px;top:654.09px;font-size:11px;color:#505050;transform:scaleX(0.9733);">Normal</div>
<div class="t" style="left:1297.30px;top:654.09px;font-size:11px;color:#505050;transform:scaleX(0.8437);">SIGNING_IN_PROGRESS</div>
<div class="t" style="left:1487.00px;top:654.09px;font-size:11px;color:#505050;transform:scaleX(0.9363);">0508615499077000000000</div>
<div class="t" style="left:1740.50px;top:654.09px;font-size:11px;color:#505050;transform:scaleX(0.8644);">Pasal 21</div>
<div style="position:absolute;left:343px;top:673.04px;width:1535px;height:26.56px;background:#fafafa;border-bottom:1px solid #eeeeee;box-sizing:border-box"></div>
<div style="position:absolute;left:401px;top:676.64px;width:19px;height:17.5px;background:#ebf2f8;border-radius:1px"></div>
<svg style="position:absolute;left:405px;top:680px" width="13" height="9" viewBox="0 0 13 9"><path d="M0.8 4.5 Q6.5 -1.8 12.2 4.5 Q6.5 10.8 0.8 4.5 Z" fill="none" stroke="#2d3e6a" stroke-width="1.15"/><circle cx="6.5" cy="4.5" r="2" fill="none" stroke="#2d3e6a" stroke-width="1.2"/></svg>
<div style="position:absolute;left:423px;top:676.54px;width:18px;height:18px;background:#bd4a4f"></div>
<svg style="position:absolute;left:427px;top:679px" width="10" height="13" viewBox="0 0 10 13"><path d="M1 1 H5.8 L9 4.2 V12 H1 Z" fill="none" stroke="#fff" stroke-width="1.2" stroke-linejoin="round"/><path d="M3.3 4 V9.5 L7 7" stroke="#fff" stroke-width="0.9" fill="none"/></svg>
<div class="t" style="left:489.60px;top:680.65px;font-size:11px;color:#505050;transform:scaleX(0.9532);">November 2025</div>
<div class="t" style="left:764.00px;top:680.65px;font-size:11px;color:#505050;transform:scaleX(0.9532);">November 2025</div>
<div class="t" style="left:957.00px;top:680.65px;font-size:11px;color:#505050;transform:scaleX(0.8900);">2507ELU7C</div>
<div class="t" style="left:1127.50px;top:680.65px;font-size:11px;color:#505050;transform:scaleX(0.9733);">Normal</div>
<div class="t" style="left:1297.30px;top:680.65px;font-size:11px;color:#505050;transform:scaleX(0.8437);">SIGNING_IN_PROGRESS</div>
<div class="t" style="left:1487.00px;top:680.65px;font-size:11px;color:#505050;transform:scaleX(0.9363);">0508615499077000000000</div>
<div class="t" style="left:1740.50px;top:680.65px;font-size:11px;color:#505050;transform:scaleX(0.8644);">Pasal 21</div>
<div style="position:absolute;left:343px;top:699.60px;width:1535px;height:26.56px;background:#ffffff;border-bottom:1px solid #eeeeee;box-sizing:border-box"></div>
<div style="position:absolute;left:401px;top:703.20px;width:19px;height:17.5px;background:#ebf2f8;border-radius:1px"></div>
<svg style="position:absolute;left:405px;top:707px" width="13" height="9" viewBox="0 0 13 9"><path d="M0.8 4.5 Q6.5 -1.8 12.2 4.5 Q6.5 10.8 0.8 4.5 Z" fill="none" stroke="#2d3e6a" stroke-width="1.15"/><circle cx="6.5" cy="4.5" r="2" fill="none" stroke="#2d3e6a" stroke-width="1.2"/></svg>
<div style="position:absolute;left:423px;top:703.10px;width:18px;height:18px;background:#bd4a4f"></div>
<svg style="position:absolute;left:427px;top:706px" width="10" height="13" viewBox="0 0 10 13"><path d="M1 1 H5.8 L9 4.2 V12 H1 Z" fill="none" stroke="#fff" stroke-width="1.2" stroke-linejoin="round"/><path d="M3.3 4 V9.5 L7 7" stroke="#fff" stroke-width="0.9" fill="none"/></svg>
<div class="t" style="left:489.60px;top:707.21px;font-size:11px;color:#505050;transform:scaleX(0.9532);">November 2025</div>
<div class="t" style="left:764.00px;top:707.21px;font-size:11px;color:#505050;transform:scaleX(0.9532);">November 2025</div>
<div class="t" style="left:957.00px;top:707.21px;font-size:11px;color:#505050;transform:scaleX(0.8900);">2507ELV8S</div>
<div class="t" style="left:1127.50px;top:707.21px;font-size:11px;color:#505050;transform:scaleX(0.9733);">Normal</div>
<div class="t" style="left:1297.30px;top:707.21px;font-size:11px;color:#505050;transform:scaleX(0.8437);">SIGNING_IN_PROGRESS</div>
<div class="t" style="left:1487.00px;top:707.21px;font-size:11px;color:#505050;transform:scaleX(0.9363);">0508615499077000000000</div>
<div class="t" style="left:1740.50px;top:707.21px;font-size:11px;color:#505050;transform:scaleX(0.8644);">Pasal 21</div>
<div style="position:absolute;left:343px;top:726.16px;width:1535px;height:26.56px;background:#fafafa;border-bottom:1px solid #eeeeee;box-sizing:border-box"></div>
<div style="position:absolute;left:401px;top:729.76px;width:19px;height:17.5px;background:#ebf2f8;border-radius:1px"></div>
<svg style="position:absolute;left:405px;top:733px" width="13" height="9" viewBox="0 0 13 9"><path d="M0.8 4.5 Q6.5 -1.8 12.2 4.5 Q6.5 10.8 0.8 4.5 Z" fill="none" stroke="#2d3e6a" stroke-width="1.15"/><circle cx="6.5" cy="4.5" r="2" fill="none" stroke="#2d3e6a" stroke-width="1.2"/></svg>
<div style="position:absolute;left:423px;top:729.66px;width:18px;height:18px;background:#bd4a4f"></div>
<svg style="position:absolute;left:427px;top:732px" width="10" height="13" viewBox="0 0 10 13"><path d="M1 1 H5.8 L9 4.2 V12 H1 Z" fill="none" stroke="#fff" stroke-width="1.2" stroke-linejoin="round"/><path d="M3.3 4 V9.5 L7 7" stroke="#fff" stroke-width="0.9" fill="none"/></svg>
<div class="t" style="left:489.60px;top:733.77px;font-size:11px;color:#505050;transform:scaleX(0.9532);">Oktober 2025</div>
<div class="t" style="left:764.00px;top:733.77px;font-size:11px;color:#505050;transform:scaleX(0.9532);">November 2025</div>
<div class="t" style="left:957.00px;top:733.77px;font-size:11px;color:#505050;transform:scaleX(0.8900);">2507ELW8I</div>
<div class="t" style="left:1127.50px;top:733.77px;font-size:11px;color:#505050;transform:scaleX(0.9733);">Normal</div>
<div class="t" style="left:1297.30px;top:733.77px;font-size:11px;color:#505050;transform:scaleX(0.8437);">SIGNING_IN_PROGRESS</div>
<div class="t" style="left:1487.00px;top:733.77px;font-size:11px;color:#505050;transform:scaleX(0.9363);">0508615499077000000000</div>
<div class="t" style="left:1740.50px;top:733.77px;font-size:11px;color:#505050;transform:scaleX(0.8644);">Pasal 21</div>
<div style="position:absolute;left:343px;top:752.72px;width:1535px;height:26.56px;background:#ffffff;border-bottom:1px solid #eeeeee;box-sizing:border-box"></div>
<div style="position:absolute;left:401px;top:756.32px;width:19px;height:17.5px;background:#ebf2f8;border-radius:1px"></div>
<svg style="position:absolute;left:405px;top:760px" width="13" height="9" viewBox="0 0 13 9"><path d="M0.8 4.5 Q6.5 -1.8 12.2 4.5 Q6.5 10.8 0.8 4.5 Z" fill="none" stroke="#2d3e6a" stroke-width="1.15"/><circle cx="6.5" cy="4.5" r="2" fill="none" stroke="#2d3e6a" stroke-width="1.2"/></svg>
<div style="position:absolute;left:423px;top:756.22px;width:18px;height:18px;background:#bd4a4f"></div>
<svg style="position:absolute;left:427px;top:759px" width="10" height="13" viewBox="0 0 10 13"><path d="M1 1 H5.8 L9 4.2 V12 H1 Z" fill="none" stroke="#fff" stroke-width="1.2" stroke-linejoin="round"/><path d="M3.3 4 V9.5 L7 7" stroke="#fff" stroke-width="0.9" fill="none"/></svg>
<div class="t" style="left:489.60px;top:760.33px;font-size:11px;color:#505050;transform:scaleX(0.9532);">Oktober 2025</div>
<div class="t" style="left:764.00px;top:760.33px;font-size:11px;color:#505050;transform:scaleX(0.9532);">November 2025</div>
<div class="t" style="left:957.00px;top:760.33px;font-size:11px;color:#505050;transform:scaleX(0.8900);">2507ELX5P</div>
<div class="t" style="left:1127.50px;top:760.33px;font-size:11px;color:#505050;transform:scaleX(0.9733);">Normal</div>
<div class="t" style="left:1297.30px;top:760.33px;font-size:11px;color:#505050;transform:scaleX(0.8437);">SIGNING_IN_PROGRESS</div>
<div class="t" style="left:1487.00px;top:760.33px;font-size:11px;color:#505050;transform:scaleX(0.9363);">0508615499077000000000</div>
<div class="t" style="left:1740.50px;top:760.33px;font-size:11px;color:#505050;transform:scaleX(0.8644);">Pasal 21</div>
<div style="position:absolute;left:343px;top:779.28px;width:1535px;height:26.56px;background:#fafafa;border-bottom:1px solid #eeeeee;box-sizing:border-box"></div>
<div style="position:absolute;left:401px;top:782.88px;width:19px;height:17.5px;background:#ebf2f8;border-radius:1px"></div>
<svg style="position:absolute;left:405px;top:786px" width="13" height="9" viewBox="0 0 13 9"><path d="M0.8 4.5 Q6.5 -1.8 12.2 4.5 Q6.5 10.8 0.8 4.5 Z" fill="none" stroke="#2d3e6a" stroke-width="1.15"/><circle cx="6.5" cy="4.5" r="2" fill="none" stroke="#2d3e6a" stroke-width="1.2"/></svg>
<div style="position:absolute;left:423px;top:782.78px;width:18px;height:18px;background:#bd4a4f"></div>
<svg style="position:absolute;left:427px;top:785px" width="10" height="13" viewBox="0 0 10 13"><path d="M1 1 H5.8 L9 4.2 V12 H1 Z" fill="none" stroke="#fff" stroke-width="1.2" stroke-linejoin="round"/><path d="M3.3 4 V9.5 L7 7" stroke="#fff" stroke-width="0.9" fill="none"/></svg>
<div class="t" style="left:489.60px;top:786.89px;font-size:11px;color:#505050;transform:scaleX(0.9532);">Oktober 2025</div>
<div class="t" style="left:764.00px;top:786.89px;font-size:11px;color:#505050;transform:scaleX(0.9532);">November 2025</div>
<div class="t" style="left:957.00px;top:786.89px;font-size:11px;color:#505050;transform:scaleX(0.8900);">2507ELYAI</div>
<div class="t" style="left:1127.50px;top:786.89px;font-size:11px;color:#505050;transform:scaleX(0.9733);">Normal</div>
<div class="t" style="left:1297.30px;top:786.89px;font-size:11px;color:#505050;transform:scaleX(0.8437);">SIGNING_IN_PROGRESS</div>
<div class="t" style="left:1487.00px;top:786.89px;font-size:11px;color:#505050;transform:scaleX(0.9363);">0508615499077000000000</div>
<div class="t" style="left:1740.50px;top:786.89px;font-size:11px;color:#505050;transform:scaleX(0.8644);">Pasal 21</div>
<div style="position:absolute;left:343px;top:805.84px;width:1535px;height:26.56px;background:#ffffff;border-bottom:1px solid #eeeeee;box-sizing:border-box"></div>
<div style="position:absolute;left:401px;top:809.44px;width:19px;height:17.5px;background:#ebf2f8;border-radius:1px"></div>
<svg style="position:absolute;left:405px;top:813px" width="13" height="9" viewBox="0 0 13 9"><path d="M0.8 4.5 Q6.5 -1.8 12.2 4.5 Q6.5 10.8 0.8 4.5 Z" fill="none" stroke="#2d3e6a" stroke-width="1.15"/><circle cx="6.5" cy="4.5" r="2" fill="none" stroke="#2d3e6a" stroke-width="1.2"/></svg>
<div style="position:absolute;left:423px;top:809.34px;width:18px;height:18px;background:#bd4a4f"></div>
<svg style="position:absolute;left:427px;top:812px" width="10" height="13" viewBox="0 0 10 13"><path d="M1 1 H5.8 L9 4.2 V12 H1 Z" fill="none" stroke="#fff" stroke-width="1.2" stroke-linejoin="round"/><path d="M3.3 4 V9.5 L7 7" stroke="#fff" stroke-width="0.9" fill="none"/></svg>
<div class="t" style="left:489.60px;top:813.45px;font-size:11px;color:#505050;transform:scaleX(0.9532);">Juni 2025</div>
<div class="t" style="left:764.00px;top:813.45px;font-size:11px;color:#505050;transform:scaleX(0.9532);">November 2025</div>
<div class="t" style="left:957.00px;top:813.45px;font-size:11px;color:#505050;transform:scaleX(0.8900);">2507ELZAM</div>
<div class="t" style="left:1127.50px;top:813.45px;font-size:11px;color:#505050;transform:scaleX(0.9733);">Normal</div>
<div class="t" style="left:1297.30px;top:813.45px;font-size:11px;color:#505050;transform:scaleX(0.8437);">SIGNING_IN_PROGRESS</div>
<div class="t" style="left:1487.00px;top:813.45px;font-size:11px;color:#505050;transform:scaleX(0.9363);">0508615499077000000000</div>
<div class="t" style="left:1740.50px;top:813.45px;font-size:11px;color:#505050;transform:scaleX(0.8644);">Pasal 21</div>
<div style="position:absolute;left:343px;top:832.40px;width:1535px;height:26.56px;background:#fafafa;border-bottom:1px solid #eeeeee;box-sizing:border-box"></div>
<div style="position:absolute;left:401px;top:836.00px;width:19px;height:17.5px;background:#ebf2f8;border-radius:1px"></div>
<svg style="position:absolute;left:405px;top:839px" width="13" height="9" viewBox="0 0 13 9"><path d="M0.8 4.5 Q6.5 -1.8 12.2 4.5 Q6.5 10.8 0.8 4.5 Z" fill="none" stroke="#2d3e6a" stroke-width="1.15"/><circle cx="6.5" cy="4.5" r="2" fill="none" stroke="#2d3e6a" stroke-width="1.2"/></svg>
<div style="position:absolute;left:423px;top:835.90px;width:18px;height:18px;background:#bd4a4f"></div>
<svg style="position:absolute;left:427px;top:838px" width="10" height="13" viewBox="0 0 10 13"><path d="M1 1 H5.8 L9 4.2 V12 H1 Z" fill="none" stroke="#fff" stroke-width="1.2" stroke-linejoin="round"/><path d="M3.3 4 V9.5 L7 7" stroke="#fff" stroke-width="0.9" fill="none"/></svg>
<div class="t" style="left:489.60px;top:840.01px;font-size:11px;color:#505050;transform:scaleX(0.9532);">Juni 2025</div>
<div class="t" style="left:764.00px;top:840.01px;font-size:11px;color:#505050;transform:scaleX(0.9532);">November 2025</div>
<div class="t" style="left:957.00px;top:840.01px;font-size:11px;color:#505050;transform:scaleX(0.8900);">2507EM088</div>
<div class="t" style="left:1127.50px;top:840.01px;font-size:11px;color:#505050;transform:scaleX(0.9733);">Normal</div>
<div class="t" style="left:1297.30px;top:840.01px;font-size:11px;color:#505050;transform:scaleX(0.8437);">SIGNING_IN_PROGRESS</div>
<div class="t" style="left:1487.00px;top:840.01px;font-size:11px;color:#505050;transform:scaleX(0.9363);">0508615499077000000000</div>
<div class="t" style="left:1740.50px;top:840.01px;font-size:11px;color:#505050;transform:scaleX(0.8644);">Pasal 21</div>
<div style="position:absolute;left:343px;top:858.96px;width:1535px;height:26.56px;background:#ffffff;border-bottom:1px solid #eeeeee;box-sizing:border-box"></div>
<div style="position:absolute;left:401px;top:862.56px;width:19px;height:17.5px;background:#ebf2f8;border-radius:1px"></div>
<svg style="position:absolute;left:405px;top:866px" width="13" height="9" viewBox="0 0 13 9"><path d="M0.8 4.5 Q6.5 -1.8 12.2 4.5 Q6.5 10.8 0.8 4.5 Z" fill="none" stroke="#2d3e6a" stroke-width="1.15"/><circle cx="6.5" cy="4.5" r="2" fill="none" stroke="#2d3e6a" stroke-width="1.2"/></svg>
<div style="position:absolute;left:423px;top:862.46px;width:18px;height:18px;background:#bd4a4f"></div>
<svg style="position:absolute;left:427px;top:865px" width="10" height="13" viewBox="0 0 10 13"><path d="M1 1 H5.8 L9 4.2 V12 H1 Z" fill="none" stroke="#fff" stroke-width="1.2" stroke-linejoin="round"/><path d="M3.3 4 V9.5 L7 7" stroke="#fff" stroke-width="0.9" fill="none"/></svg>
<div class="t" style="left:489.60px;top:866.57px;font-size:11px;color:#505050;transform:scaleX(0.9532);">Mei 2025</div>
<div class="t" style="left:764.00px;top:866.57px;font-size:11px;color:#505050;transform:scaleX(0.9532);">November 2025</div>
<div class="t" style="left:957.00px;top:866.57px;font-size:11px;color:#505050;transform:scaleX(0.8900);">2507EM17Q</div>
<div class="t" style="left:1127.50px;top:866.57px;font-size:11px;color:#505050;transform:scaleX(0.9733);">Normal</div>
<div class="t" style="left:1297.30px;top:866.57px;font-size:11px;color:#505050;transform:scaleX(0.8437);">SIGNING_IN_PROGRESS</div>
<div class="t" style="left:1487.00px;top:866.57px;font-size:11px;color:#505050;transform:scaleX(0.9363);">0508615499077000000000</div>
<div class="t" style="left:1740.50px;top:866.57px;font-size:11px;color:#505050;transform:scaleX(0.8644);">Pasal 21</div>
<div style="position:absolute;left:343px;top:885.52px;width:1535px;height:26.56px;background:#fafafa;border-bottom:1px solid #eeeeee;box-sizing:border-box"></div>
<div style="position:absolute;left:401px;top:889.12px;width:19px;height:17.5px;background:#ebf2f8;border-radius:1px"></div>
<svg style="position:absolute;left:405px;top:893px" width="13" height="9" viewBox="0 0 13 9"><path d="M0.8 4.5 Q6.5 -1.8 12.2 4.5 Q6.5 10.8 0.8 4.5 Z" fill="none" stroke="#2d3e6a" stroke-width="1.15"/><circle cx="6.5" cy="4.5" r="2" fill="none" stroke="#2d3e6a" stroke-width="1.2"/></svg>
<div style="position:absolute;left:423px;top:889.02px;width:18px;height:18px;background:#bd4a4f"></div>
<svg style="position:absolute;left:427px;top:892px" width="10" height="13" viewBox="0 0 10 13"><path d="M1 1 H5.8 L9 4.2 V12 H1 Z" fill="none" stroke="#fff" stroke-width="1.2" stroke-linejoin="round"/><path d="M3.3 4 V9.5 L7 7" stroke="#fff" stroke-width="0.9" fill="none"/></svg>
<div class="t" style="left:489.60px;top:893.13px;font-size:11px;color:#505050;transform:scaleX(0.9532);">Mei 2025</div>
<div class="t" style="left:764.00px;top:893.13px;font-size:11px;color:#505050;transform:scaleX(0.9532);">November 2025</div>
<div class="t" style="left:957.00px;top:893.13px;font-size:11px;color:#505050;transform:scaleX(0.8900);">2507EM23W</div>
<div class="t" style="left:1127.50px;top:893.13px;font-size:11px;color:#505050;transform:scaleX(0.9733);">Normal</div>
<div class="t" style="left:1297.30px;top:893.13px;font-size:11px;color:#505050;transform:scaleX(0.8437);">SIGNING_IN_PROGRESS</div>
<div class="t" style="left:1487.00px;top:893.13px;font-size:11px;color:#505050;transform:scaleX(0.9363);">0508615499077000000000</div>
<div class="t" style="left:1740.50px;top:893.13px;font-size:11px;color:#505050;transform:scaleX(0.8644);">Pasal 21</div>
<div style="position:absolute;left:343px;top:912.08px;width:1535px;height:26.56px;background:#ffffff;border-bottom:1px solid #eeeeee;box-sizing:border-box"></div>
<div style="position:absolute;left:401px;top:915.68px;width:19px;height:17.5px;background:#ebf2f8;border-radius:1px"></div>
<svg style="position:absolute;left:405px;top:919px" width="13" height="9" viewBox="0 0 13 9"><path d="M0.8 4.5 Q6.5 -1.8 12.2 4.5 Q6.5 10.8 0.8 4.5 Z" fill="none" stroke="#2d3e6a" stroke-width="1.15"/><circle cx="6.5" cy="4.5" r="2" fill="none" stroke="#2d3e6a" stroke-width="1.2"/></svg>
<div style="position:absolute;left:423px;top:915.58px;width:18px;height:18px;background:#bd4a4f"></div>
<svg style="position:absolute;left:427px;top:918px" width="10" height="13" viewBox="0 0 10 13"><path d="M1 1 H5.8 L9 4.2 V12 H1 Z" fill="none" stroke="#fff" stroke-width="1.2" stroke-linejoin="round"/><path d="M3.3 4 V9.5 L7 7" stroke="#fff" stroke-width="0.9" fill="none"/></svg>
<div class="t" style="left:489.60px;top:919.69px;font-size:11px;color:#505050;transform:scaleX(0.9532);">Mei 2025</div>
<div class="t" style="left:764.00px;top:919.69px;font-size:11px;color:#505050;transform:scaleX(0.9532);">November 2025</div>
<div class="t" style="left:957.00px;top:919.69px;font-size:11px;color:#505050;transform:scaleX(0.8900);">2507EM36H</div>
<div class="t" style="left:1127.50px;top:919.69px;font-size:11px;color:#505050;transform:scaleX(0.9733);">Normal</div>
<div class="t" style="left:1297.30px;top:919.69px;font-size:11px;color:#505050;transform:scaleX(0.8437);">SIGNING_IN_PROGRESS</div>
<div class="t" style="left:1487.00px;top:919.69px;font-size:11px;color:#505050;transform:scaleX(0.9363);">0508615499077000000000</div>
<div class="t" style="left:1740.50px;top:919.69px;font-size:11px;color:#505050;transform:scaleX(0.8644);">Pasal 21</div>
<div style="position:absolute;left:396px;top:434px;width:1px;height:504.6px;background:#eeeeee"></div>
<div style="position:absolute;left:483px;top:434px;width:1px;height:504.6px;background:#eeeeee"></div>
<div style="position:absolute;left:757px;top:434px;width:1px;height:504.6px;background:#eeeeee"></div>
<div style="position:absolute;left:951px;top:434px;width:1px;height:504.6px;background:#eeeeee"></div>
<div style="position:absolute;left:1121px;top:434px;width:1px;height:504.6px;background:#eeeeee"></div>
<div style="position:absolute;left:1291px;top:434px;width:1px;height:504.6px;background:#eeeeee"></div>
<div style="position:absolute;left:1481px;top:434px;width:1px;height:504.6px;background:#eeeeee"></div>
<div style="position:absolute;left:1734px;top:434px;width:1px;height:504.6px;background:#eeeeee"></div>
<div style="position:absolute;left:343px;top:938.6px;width:1535px;height:5.4px;background:#f1f1f1"></div>
<div style="position:absolute;left:343px;top:939.5px;width:477px;height:4.5px;background:#f8e0a0;border-radius:2px"></div>
<div style="position:absolute;left:343px;top:943px;width:1535px;height:53px;border:1px solid #efefef;border-top:none;box-sizing:border-box"></div>
<svg style="position:absolute;left:1050px;top:965px" width="7" height="9" viewBox="0 0 7 9"><path d="M5.5 1 L2 4.5 L5.5 8" stroke="#aaa" stroke-width="1.2" fill="none"/></svg>
<div style="position:absolute;left:1070px;top:957px;width:25px;height:25px;background:#e3f0fa;border-radius:1px"></div>
<div class="t" style="left:1079.00px;top:964.86px;font-size:10.5px;color:#555;">1</div>
<svg style="position:absolute;left:1106px;top:965px" width="7" height="9" viewBox="0 0 7 9"><path d="M1.5 1 L5 4.5 L1.5 8" stroke="#aaa" stroke-width="1.2" fill="none"/></svg>
<div style="position:absolute;left:1130px;top:958px;width:45px;height:24px;border:1px solid #d7dbe0;border-radius:3px;box-sizing:border-box;background:#fff"></div>
<div class="t" style="left:1138.00px;top:965.86px;font-size:10.5px;color:#333;transform:scaleX(1.0276);">50</div>
<svg style="position:absolute;left:1156px;top:967px" width="12" height="7" viewBox="0 0 12 7"><path d="M1 1 L6 6 L11 1" stroke="#555" stroke-width="1.3" fill="none"/></svg>
<div style="position:absolute;left:0px;top:1023px;width:1904px;height:9px;background:#212a60"></div>
<div style="position:absolute;left:1270px;top:1023px;width:634px;height:9px;background:linear-gradient(90deg,#f9c21a 0%,#fbcd16 50%,#f8e510 50.2%,#f5e60f 100%)"></div>
<div style="position:absolute;left:1904px;top:121px;width:16px;height:911px;background:#f9f9f9"></div>
<svg style="position:absolute;left:1906px;top:124px" width="12" height="8" viewBox="0 0 12 8"><path d="M1.5 7 L6 1.5 L10.5 7 Z" fill="#6e6e6e"/></svg>
<div style="position:absolute;left:1908px;top:135px;width:9px;height:789px;background:#6e6e6e;border-radius:5px"></div>
<svg style="position:absolute;left:1906px;top:1019px" width="12" height="8" viewBox="0 0 12 8"><path d="M1.5 1 L6 6.5 L10.5 1 Z" fill="#6e6e6e"/></svg>
<div style="position:absolute;left:0px;top:1032px;width:1920px;height:48px;background:linear-gradient(90deg,#211e1d 0%,#25211f 35%,#25211f 65%,#222122 80%,#202226 88%,#2a241f 96%,#2a241f 100%)"></div>
<svg style="position:absolute;left:17px;top:1046px" width="28" height="22" viewBox="0 0 28 22"><defs><linearGradient id="cl" x1="0" y1="0" x2="0" y2="1"><stop offset="0" stop-color="#e6f0fb"/><stop offset="1" stop-color="#8fb5e0"/></linearGradient></defs><path d="M4 20 Q0 20 1 16 Q2 12.5 6 13 Q7 7 13 7.5 Q18 8 19.5 12 Q25 11.5 26 16 Q26.5 20 22 20 Z" fill="url(#cl)"/></svg>
<div style="position:absolute;left:30px;top:1039px;width:15px;height:15px;background:#f4a5ad;border-radius:50%"></div>
<div class="t" style="left:34.50px;top:1041.60px;font-size:10px;color:#2a1010;transform:scaleX(1.0790);">5</div>
<div class="t" style="left:50.60px;top:1042.37px;font-size:11.5px;color:#ffffff;transform:scaleX(0.9730);">29°C</div>
<div class="t" style="left:50.60px;top:1058.37px;font-size:11.5px;color:#e8e8e8;transform:scaleX(0.9915);">Berawan</div>
<svg style="position:absolute;left:617px;top:1045px" width="23" height="23" viewBox="0 0 23 23"><defs><linearGradient id="wl" x1="0" y1="0" x2="1" y2="1"><stop offset="0" stop-color="#5fd0ff"/><stop offset="1" stop-color="#1a8fe8"/></linearGradient></defs><rect x="0" y="0" width="11" height="11" fill="url(#wl)"/><rect x="12" y="0" width="11" height="11" fill="url(#wl)"/><rect x="0" y="12" width="11" height="11" fill="url(#wl)"/><rect x="12" y="12" width="11" height="11" fill="url(#wl)"/></svg>
<div style="position:absolute;left:653px;top:1040px;width:219px;height:31px;background:#3a3634;border-radius:16px;box-shadow:inset 0 0 0 1px #4a4542"></div>
<svg style="position:absolute;left:665px;top:1049px" width="15" height="15" viewBox="0 0 15 15"><circle cx="6.5" cy="6.5" r="5" stroke="#e8e8e8" stroke-width="1.6" fill="none"/><path d="M10.2 10.2 L14 14" stroke="#e8e8e8" stroke-width="1.8"/></svg>
<div class="t" style="left:690.00px;top:1049.63px;font-size:13px;color:#e0e0e0;transform:scaleX(0.9954);">Search</div>
<svg style="position:absolute;left:822px;top:1042px" width="46" height="28" viewBox="0 0 46 28"><ellipse cx="25" cy="24" rx="20" ry="3" fill="#d9c39a"/><path d="M6 8 L12 4 L15 9 L34 10 L38 14 L36 23 L33 23 L32 16 L18 16 L16 23 L13 23 L13 14 L8 12 Z" fill="#c9c3dc"/><path d="M17 10 L18 15 M21 10 L22 15 M25 10 L26 15 M29 10 L30 15 M33 11 L34 15" stroke="#6a5a9a" stroke-width="1.2"/></svg>
<svg style="position:absolute;left:885px;top:1045px" width="24" height="22" viewBox="0 0 24 22"><rect x="0" y="6" width="15" height="14" rx="1.5" fill="#6b6b6b"/><rect x="3" y="9" width="12" height="11" fill="#9a9a9a"/><rect x="8" y="0" width="15" height="15" rx="1.5" fill="#f0f0f0"/></svg>
<svg style="position:absolute;left:929px;top:1044px" width="25" height="23" viewBox="0 0 25 23"><path d="M0 3 Q0 1 2 1 H8 L10 3 H23 Q25 3 25 5 V21 Q25 23 23 23 H2 Q0 23 0 21 Z" fill="#f2c033"/><rect x="0" y="6" width="25" height="17" rx="1.5" fill="#ffd54a"/><rect x="6" y="15" width="13" height="7" rx="1" fill="#1f6fd0"/></svg>
<div style="position:absolute;left:937px;top:1072px;width:8px;height:3px;background:#9a9a9a;border-radius:2px"></div>
<svg style="position:absolute;left:972px;top:1044px" width="25" height="25" viewBox="0 0 25 25"><defs><linearGradient id="eg" x1="0" y1="0" x2="0.3" y2="1"><stop offset="0" stop-color="#2ba6e8"/><stop offset="1" stop-color="#1552b0"/></linearGradient><linearGradient id="eg2" x1="0" y1="0" x2="1" y2="1"><stop offset="0" stop-color="#3fb8e0"/><stop offset="1" stop-color="#5ad36a"/></linearGradient></defs><circle cx="12.5" cy="12.5" r="12" fill="url(#eg)"/><path d="M6 6 Q11 0.5 18 2 Q24.5 4.5 24.5 12 Q24.5 17 20 18 Q15 18.5 14.5 13.5 Q14 9 9 8.5 Q7 8.5 6 6 Z" fill="url(#eg2)"/><ellipse cx="11.5" cy="13.5" rx="3.8" ry="3.5" fill="#15202a"/></svg>
<svg style="position:absolute;left:1016px;top:1044px" width="25" height="24" viewBox="0 0 25 24"><path d="M7 5 V3 Q7 1 9 1 H16 Q18 1 18 3 V5" stroke="#40b0f0" stroke-width="2" fill="none"/><rect x="0.5" y="5" width="24" height="19" rx="3" fill="#f4f4f4"/><rect x="8" y="10" width="4" height="4" fill="#f25022"/><rect x="13" y="10" width="4" height="4" fill="#7fba00"/><rect x="8" y="15" width="4" height="4" fill="#00a4ef"/><rect x="13" y="15" width="4" height="4" fill="#ffb900"/></svg>
<svg style="position:absolute;left:1060px;top:1044px" width="25" height="25" viewBox="0 0 25 25"><path d="M12.5 1.5 A11 11 0 1 1 5 21 L1.5 23.5 L3 19 A11 11 0 0 1 12.5 1.5 Z" fill="none" stroke="#27c15b" stroke-width="2.4"/><path d="M8 7.5 Q9.5 6.5 10.5 8.5 L11 10 Q10.5 11 10 11.5 Q12 14.5 14 15 Q14.8 14.3 15.5 13.8 L17.5 15 Q18 16.5 16 17.5 Q12 18 8.5 13.5 Q6.5 10 8 7.5 Z" fill="#27c15b"/></svg>
<div style="position:absolute;left:1098px;top:1037px;width:38px;height:39px;background:#2c2826;border-radius:4px;box-shadow:inset 0 0 0 1px #3a3533"></div>
<svg style="position:absolute;left:1105px;top:1044px" width="24" height="24" viewBox="0 0 24 24"><circle cx="12" cy="12" r="12" fill="#e33b2e"/><path d="M12 12 L1.6 6 A12 12 0 0 0 12 24 Z" fill="#1e9e4a"/><path d="M12 12 L12 24 A12 12 0 0 0 22.4 6 Z" fill="#f9c623"/><path d="M12 12 L22.4 6 A12 12 0 0 0 1.6 6 Z" fill="#e33b2e"/><circle cx="12" cy="12" r="5.5" fill="#fff"/><circle cx="12" cy="12" r="4.3" fill="#2b72e6"/></svg>
<div style="position:absolute;left:1109px;top:1072px;width:16px;height:3px;background:#5cb8f0;border-radius:2px"></div>
<svg style="position:absolute;left:1149px;top:1044px" width="24" height="24" viewBox="0 0 24 24"><circle cx="12" cy="12" r="12" fill="#e0324f"/><path d="M7 18 L12 6 L17 18" stroke="#fff" stroke-width="2.4" fill="none"/></svg>
<svg style="position:absolute;left:1192px;top:1044px" width="25" height="24" viewBox="0 0 25 24"><rect width="25" height="24" fill="#ef443b"/><path d="M9 12 L13 8 L17 12 L13 16 Z" fill="#fff"/><path d="M5 12 L9 8 L11 10 L9 12 L11 14 L9 16 Z" fill="#fff"/></svg>
<svg style="position:absolute;left:1237px;top:1044px" width="23" height="24" viewBox="0 0 23 24"><rect x="6" y="1" width="17" height="22" rx="2" fill="#21a366"/><rect x="6" y="1" width="17" height="7" fill="#33c481"/><rect x="14.5" y="8" width="8.5" height="15" fill="#107c41"/><rect x="0" y="11" width="12" height="12" rx="1.5" fill="#185c37"/><path d="M3 14 L9 20 M9 14 L3 20" stroke="#fff" stroke-width="1.6"/></svg>
<div style="position:absolute;left:1244px;top:1072px;width:8px;height:3px;background:#9a9a9a;border-radius:2px"></div>
<svg style="position:absolute;left:1281px;top:1043px" width="22" height="25" viewBox="0 0 22 25"><rect x="0" y="2" width="19" height="23" fill="#d8e8a0"/><rect x="0" y="2" width="19" height="4" fill="#f0f0f0"/><path d="M0 8 H19" stroke="#888" stroke-width="0.5"/><rect x="1" y="13" width="17" height="11" fill="#8cc63f"/><path d="M4 10 V18 M6 11 H12" stroke="#222" stroke-width="1.2"/><path d="M14 18 L21 3" stroke="#e0b030" stroke-width="2"/></svg>
<div style="position:absolute;left:1289px;top:1072px;width:8px;height:3px;background:#9a9a9a;border-radius:2px"></div>
<svg style="position:absolute;left:1696px;top:1052px" width="12" height="8" viewBox="0 0 12 8"><path d="M1 7 L6 2 L11 7" stroke="#fff" stroke-width="1.5" fill="none"/></svg>
<svg style="position:absolute;left:1725px;top:1048px" width="18" height="16" viewBox="0 0 18 16"><path d="M3 13 Q0 13 0.5 10 Q1 7.5 4 8 Q5 4 9 4 Q13 4 14 7.5 Q17.5 7.5 17.5 10.5 Q17.5 13 15 13 Z" fill="#8a8a8a"/><path d="M2 1 L16 15" stroke="#e8e8e8" stroke-width="1.1"/></svg>
<svg style="position:absolute;left:1757px;top:1048px" width="18" height="17" viewBox="0 0 18 17"><rect x="0.7" y="0.7" width="12" height="9.5" fill="none" stroke="#fff" stroke-width="1.3"/><path d="M6.5 10.5 V14 M3 14.5 H10" stroke="#fff" stroke-width="1.3"/><rect x="13" y="0.7" width="4" height="5" rx="1" fill="none" stroke="#fff" stroke-width="1.2"/><path d="M15 6 V16" stroke="#fff" stroke-width="1.3"/></svg>
<svg style="position:absolute;left:1782px;top:1049px" width="17" height="15" viewBox="0 0 17 15"><path d="M1 5 H4 L8 1.5 V13.5 L4 10 H1 Z" fill="none" stroke="#fff" stroke-width="1.2" stroke-linejoin="round"/><path d="M10 5 Q11.5 7.5 10 10 M12 3.5 Q14.5 7.5 12 11.5 M14 2 Q17.5 7.5 14 13" fill="none" stroke="#fff" stroke-width="1.2"/></svg>
<div class="t" style="left:1848.75px;top:1042.37px;font-size:11.5px;color:#fff;transform:scaleX(0.9644);">12:31</div>
<div class="t" style="left:1816.00px;top:1058.16px;font-size:11.5px;color:#fff;transform:scaleX(1.0513);">31/01/2026</div>
<svg style="position:absolute;left:1885px;top:1048px" width="15" height="16" viewBox="0 0 15 16"><path d="M2 12 V7 A5.5 5.5 0 0 1 13 7 V12 L14.5 13 H0.5 Z" fill="#7fd3f5"/><path d="M5.5 14 Q7.5 16.5 9.5 14" fill="#7fd3f5"/></svg>
</body></html>
